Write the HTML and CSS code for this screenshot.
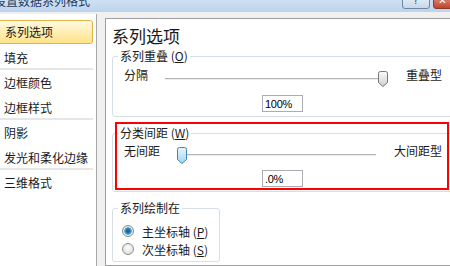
FILE: index.html
```html
<html>
  <head>
    <title>设置数据系列格式</title>
    <link rel="stylesheet" href="styles.css">
  </head>
  <body>
    <div class="titlebar">
      <span class="title">设置数据系列格式</span>
      <span class="tbtn help">?</span>
      <span class="tbtn close">✕</span>
    </div>
    <div class="main">
      <ul class="nav">
        <li class="item selected">系列选项</li>
        <li class="item sep">填充</li>
        <li class="item">边框颜色</li>
        <li class="item sep">边框样式</li>
        <li class="item">阴影</li>
        <li class="item sep">发光和柔化边缘</li>
        <li class="item">三维格式</li>
      </ul>
      <div class="panel">
        <h1 class="heading">系列选项</h1>

        <fieldset class="group">
          <legend>系列重叠 (<u>O</u>)</legend>
          <div class="slider-row">
            <span class="end-label">分隔</span>
            <div class="slider overlap">
              <div class="track"></div>
              <svg class="thumb" style="left: 213px" width="10" height="16" viewBox="0 0 10 16">
                <defs>
                  <linearGradient id="grayThumb" x1="0" y1="0" x2="0" y2="1">
                    <stop offset="0" stop-color="#fbfbfb"/>
                    <stop offset="1" stop-color="#cfcfcf"/>
                  </linearGradient>
                </defs>
                <path d="M0.5 2.5 Q0.5 0.5 2.5 0.5 H7.5 Q9.5 0.5 9.5 2.5 V11.5 L5 15.5 L0.5 11.5 Z" fill="url(#grayThumb)" stroke="#777"/>
              </svg>
            </div>
            <span class="end-label right-a">重叠型</span>
          </div>
          <input class="value" type="text" value="100%" readonly>
        </fieldset>

        <fieldset class="group">
          <legend>分类间距 (<u>W</u>)</legend>
          <div class="slider-row">
            <span class="end-label">无间距</span>
            <div class="slider gap">
              <div class="track"></div>
              <svg class="thumb" style="left: 0px" width="10" height="17" viewBox="0 0 10 17">
                <defs>
                  <linearGradient id="blueThumb" x1="0" y1="0" x2="0" y2="1">
                    <stop offset="0" stop-color="#e9f6fd"/>
                    <stop offset="1" stop-color="#9fd5f2"/>
                  </linearGradient>
                </defs>
                <path d="M0.5 2.5 Q0.5 0.5 2.5 0.5 H7.5 Q9.5 0.5 9.5 2.5 V12.5 L5 16.5 L0.5 12.5 Z" fill="url(#blueThumb)" stroke="#3f86b8"/>
              </svg>
            </div>
            <span class="end-label right-b">大间距型</span>
          </div>
          <input class="value gap-value" type="text" value=".0%" readonly>
        </fieldset>

        <fieldset class="group plot-on">
          <legend>系列绘制在</legend>
          <label class="radio-row">
            <input type="radio" name="axis" checked>
            <span>主坐标轴 (<u>P</u>)</span>
          </label>
          <label class="radio-row">
            <input type="radio" name="axis">
            <span>次坐标轴 (<u>S</u>)</span>
          </label>
        </fieldset>

        <div class="callout"></div>
      </div>
    </div>
  </body>
</html>
```

FILE: styles.css
```css
body {
  margin: 0;
  width: 450px;
  height: 266px;
  overflow: hidden;
  background: #f0f0f0;
  font-family: "Noto Sans CJK SC", sans-serif;
  font-size: 12px;
  color: #1a1a1a;
}

.titlebar {
  display: flex;
  align-items: flex-start;
  height: 12px;
  overflow: hidden;
  background: linear-gradient(#cfe0f3, #bdd3ec);
}

.title {
  flex: 1;
  margin-left: -6px;
  margin-top: -5px;
  line-height: 12px;
  color: #1f3a5f;
  white-space: nowrap;
}

.tbtn {
  margin-top: -8px;
  height: 17px;
  box-sizing: border-box;
  border: 1px solid #6f86a6;
  font-family: "DejaVu Sans", sans-serif;
  font-size: 10px;
  line-height: 15px;
  text-align: center;
}

.help {
  width: 28px;
  margin-right: 3px;
  border-radius: 0 0 3px 3px;
  background: linear-gradient(#f2f7fc, #c6d7ea);
  color: #34506f;
}

.close {
  width: 19px;
  margin-right: -2px;
  border-color: #8a3b2f;
  border-radius: 0 0 0 3px;
  background: linear-gradient(#e9a898, #c4432d);
  color: #fff;
}

.main {
  display: flex;
  height: 254px;
  padding-top: 2px;
  box-sizing: border-box;
}

.nav {
  list-style: none;
  margin: 0 0 0 -3px;
  padding: 6px 3px 0 0;
  width: 96px;
  flex: none;
  background: #fff;
  border-right: 1px solid #a7a7a7;
}

.item {
  height: 25px;
  line-height: 25px;
  padding-left: 7px;
  white-space: nowrap;
}

.item.sep {
  background: linear-gradient(to top, #e6e6e6 0, #e6e6e6 2px, transparent 2px);
}

.item.selected {
  height: 24px;
  margin-bottom: 1px;
  line-height: 22px;
  box-sizing: border-box;
  border: 1px solid #e3b34a;
  border-radius: 3px;
  background: linear-gradient(#fffae0, #ffe38a);
}

.panel {
  position: relative;
  flex: none;
  width: 360px;
  margin-left: 8px;
  margin-top: 4px;
  padding-top: 7px;
  background: #fff;
  border: 1px solid #a0a0a0;
}

.heading {
  margin: 0 0 0 6px;
  font-size: 17px;
  font-weight: normal;
  line-height: 20px;
}

.group {
  margin: 3px 0 0 6px;
  padding: 5px 0 4px 5px;
  min-width: 0;
  border: 1px solid #d5dfe5;
  border-radius: 3px;
}

.group + .group {
  margin-top: 9px;
  padding-top: 4px;
}

legend {
  padding: 0 2px;
  line-height: 14px;
}

u {
  text-decoration-thickness: 1px;
}

.slider-row {
  display: flex;
  align-items: flex-start;
  height: 20px;
  padding-left: 6px;
}

.end-label {
  line-height: 14px;
  white-space: nowrap;
}

.slider {
  position: relative;
  flex: none;
  height: 20px;
  margin-left: 17px;
}

.slider.overlap {
  width: 223px;
}

.slider.gap {
  width: 204px;
}

.track {
  margin-top: 10px;
  height: 0;
  border-top: 1px solid #b3b3b3;
  border-bottom: 1px solid #ececec;
}

.overlap .track {
  margin-right: 8px;
}

.gap .track {
  margin-left: 4px;
  margin-right: 5px;
}

.thumb {
  position: absolute;
  top: 3px;
}

.right-a {
  margin-left: 18px;
}

.right-b {
  margin-left: 13px;
}

.value {
  display: block;
  margin: 7px 0 0 144px;
  width: 41px;
  height: 17px;
  box-sizing: border-box;
  padding: 0 2px;
  border: 1px solid #abadb3;
  font-family: "Liberation Sans", sans-serif;
  font-size: 11px;
  letter-spacing: -0.3px;
  line-height: 15px;
  color: #000;
  outline: none;
}

.gap-value {
  margin-top: 6px;
}

.plot-on {
  width: 108px;
  box-sizing: border-box;
  padding: 7px 0 3px 5px;
}

.group + .plot-on {
  margin-top: 9px;
  padding-top: 7px;
}

.radio-row {
  display: flex;
  align-items: center;
  height: 18px;
  padding-left: 4px;
}

.radio-row input {
  appearance: none;
  -webkit-appearance: none;
  margin: 0 8px 0 0;
  width: 12px;
  height: 12px;
  border: 1px solid #8e8f8f;
  border-radius: 50%;
  background: radial-gradient(circle at 50% 40%, #fdfdfd, #d6d6d6);
}

.radio-row input:checked {
  background: radial-gradient(circle, #154f7e 0, #2d86c0 2.5px, #5aaee0 3.5px, #e9eef2 4px, #d6d6d6 6px);
}

.callout {
  position: absolute;
  left: 9px;
  top: 103px;
  width: 334px;
  height: 68px;
  box-sizing: border-box;
  border: 2px solid #ff0000;
}
```
